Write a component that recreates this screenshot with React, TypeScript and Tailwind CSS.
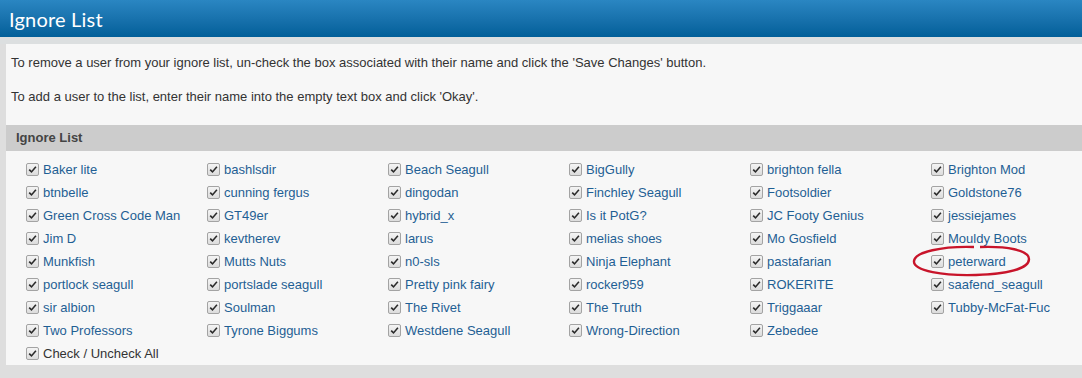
const rows: string[][] = [
  ['Baker lite', 'bashlsdir', 'Beach Seagull', 'BigGully', 'brighton fella', 'Brighton Mod'],
  ['btnbelle', 'cunning fergus', 'dingodan', 'Finchley Seagull', 'Footsoldier', 'Goldstone76'],
  ['Green Cross Code Man', 'GT49er', 'hybrid_x', 'Is it PotG?', 'JC Footy Genius', 'jessiejames'],
  ['Jim D', 'kevtherev', 'larus', 'melias shoes', 'Mo Gosfield', 'Mouldy Boots'],
  ['Munkfish', 'Mutts Nuts', 'n0-sls', 'Ninja Elephant', 'pastafarian', 'peterward'],
  ['portlock seagull', 'portslade seagull', 'Pretty pink fairy', 'rocker959', 'ROKERITE', 'saafend_seagull'],
  ['sir albion', 'Soulman', 'The Rivet', 'The Truth', 'Triggaaar', 'Tubby-McFat-Fuc'],
  ['Two Professors', 'Tyrone Biggums', 'Westdene Seagull', 'Wrong-Direction', 'Zebedee'],
];

function Check() {
  return (
    <span className="inline-flex w-[13px] h-[13px] shrink-0 items-center justify-center border border-[#a3a3a3] rounded-[2px] bg-gradient-to-b from-[#f4f4f4] to-[#dcdcdc]">
      <svg width="9" height="9" viewBox="0 0 9 9">
        <path d="M1.2 4.6 L3.5 6.9 L7.9 1.8" fill="none" stroke="#2b2b2b" strokeWidth="1.6" />
      </svg>
    </span>
  );
}

function Entry({ name, link = true }: { name: string; link?: boolean }) {
  return (
    <label className="flex items-center gap-[4px] h-[23px] whitespace-nowrap">
      <Check />
      <span className={link ? 'text-[#1f5f94]' : 'text-[#333]'}>{name}</span>
    </label>
  );
}

export default function App() {
  return (
    <div className="w-[1082px] h-[378px] overflow-hidden bg-[#dedede] font-['Liberation_Sans',Arial,sans-serif] text-[13px]">
      <div className="h-[37px] bg-gradient-to-b from-[#2a86c2] to-[#015f99] flex items-center px-[9px]">
        <h1 className="text-white text-[20px] font-['Lato',sans-serif] tracking-[0.2px]">Ignore List</h1>
      </div>
      <div className="h-[7px] bg-[#dcdfe0]" />
      <div className="ml-[6px] bg-[#f7f7f7] h-[81px] pl-[5px] pt-[10px] text-[#333]">
        <p className="leading-[18px]">
          To remove a user from your ignore list, un-check the box associated with their name and click the 'Save Changes' button.
        </p>
        <p className="leading-[18px] mt-[16px]">
          To add a user to the list, enter their name into the empty text box and click 'Okay'.
        </p>
      </div>
      <div className="ml-[6px] h-[26px] bg-[#cccccc] flex items-center pl-[10px] font-bold text-[#444]">Ignore List</div>
      <div className="ml-[6px] h-[214px] bg-[#f7f7f7] pl-[20px] pt-[7px] relative">
        <div className="grid grid-cols-[repeat(6,181px)]">
          {rows.flat().map((n) => (
            <Entry key={n} name={n} />
          ))}
        </div>
        <Entry name="Check / Uncheck All" link={false} />
        <svg className="absolute left-[906px] top-[93px]" width="120" height="34" viewBox="0 0 120 34">
          <path
            d="M62 3 C30 2 3 8 2 17 C1 27 32 32 64 31 C94 30 117 25 117 15 C117 6 94 2 68 3"
            fill="none"
            stroke="#c8142a"
            strokeWidth="2.4"
          />
        </svg>
      </div>
    </div>
  );
}
